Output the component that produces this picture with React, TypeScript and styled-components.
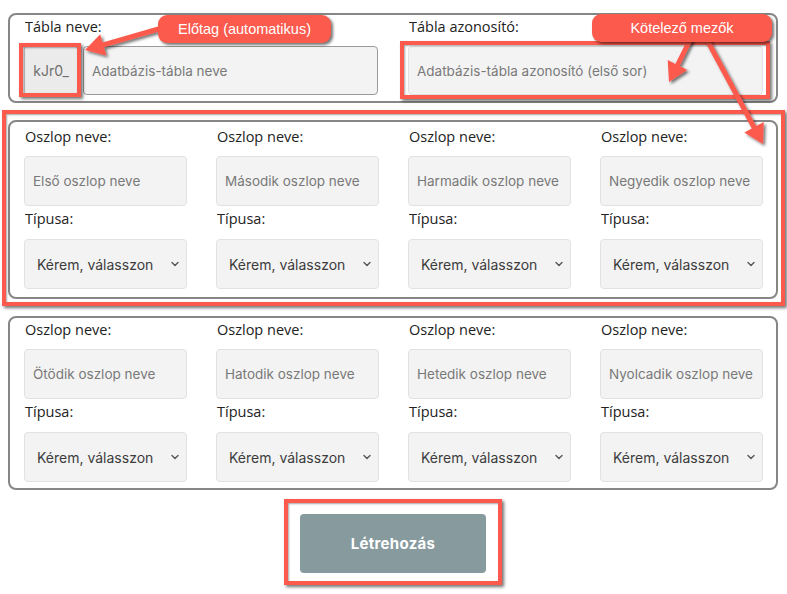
import React from "react";
import styled, { createGlobalStyle } from "styled-components";

const Global = createGlobalStyle`
  html, body { margin: 0; padding: 0; background: #ffffff; }
  body { font-family: "Open Sans", "Noto Sans", sans-serif; }
  * { box-sizing: border-box; }
`;

const RED = "#fb5a4d";

const Page = styled.div`
  position: relative;
  width: 787px;
  height: 594px;
  padding: 13px 8px 0 8px;
  overflow: hidden;
`;

const Card = styled.div<{ $pt: number; $pb: number }>`
  width: 770px;
  border: 2px solid #868686;
  border-radius: 8px;
  padding: ${(p) => p.$pt}px 13px ${(p) => p.$pb}px 14px;
  & + & { margin-top: 17px; }
`;

const TopGrid = styled.div`
  display: grid;
  grid-template-columns: 354px 355px;
  column-gap: 30px;
`;

const ColGrid = styled.div`
  display: grid;
  grid-template-columns: repeat(4, 163px);
  column-gap: 29px;
`;

const Field = styled.div`
  display: flex;
  flex-direction: column;
`;

const Label = styled.label<{ $mb: number; $mt?: number }>`
  font-family: "Open Sans", sans-serif;
  font-size: 14.5px;
  line-height: 20px;
  color: #222;
  padding-left: 1px;
  margin-top: ${(p) => p.$mt ?? 0}px;
  margin-bottom: ${(p) => p.$mb}px;
`;

const InputGroup = styled.div`
  display: flex;
  gap: 5px;
  height: 49px;
`;

const Prefix = styled.div`
  width: 54px;
  flex: none;
  display: flex;
  align-items: center;
  justify-content: center;
  background: #ebebeb;
  border: 1px solid #bdbdbd;
  border-radius: 3px;
  font-family: "Inter", sans-serif;
  font-size: 14px;
  color: #6f6f6f;
`;

const TextInput = styled.input<{ $h: number; $dark?: boolean }>`
  width: 100%;
  height: ${(p) => p.$h}px;
  border: 1px solid ${(p) => (p.$dark ? "#9a9a9a" : "#e2e2e2")};
  border-radius: 4px;
  background: #f3f3f3;
  padding: 0 8px;
  font-family: "Inter", sans-serif;
  font-size: 13.5px;
  color: #333;
  outline: none;
  &::placeholder { color: #797979; }
`;

const SelectWrap = styled.div`
  display: flex;
  align-items: center;
  height: 50px;
`;

const Select = styled.select`
  appearance: none;
  -webkit-appearance: none;
  width: 100%;
  height: 100%;
  border: 1px solid #e2e2e2;
  border-radius: 4px;
  background: #f3f3f3;
  padding: 0 12px;
  font-family: "Inter", sans-serif;
  font-size: 14px;
  color: #3c3c3c;
  outline: none;
`;

const Chevron = styled.svg`
  flex: none;
  width: 10px;
  height: 10px;
  margin-left: -17px;
  margin-right: 7px;
  pointer-events: none;
`;

const ColCell = styled.div`
  display: flex;
  flex-direction: column;
`;

const ButtonRow = styled.div`
  display: flex;
  justify-content: center;
  margin-top: 24px;
  padding-right: 1px;
`;

const Button = styled.button`
  width: 186px;
  height: 59px;
  border: none;
  border-radius: 4px;
  background: #879a9e;
  color: #ffffff;
  font-family: "Inter", sans-serif;
  font-weight: 700;
  font-size: 15px;
  letter-spacing: 0.3px;
`;

const Highlight = styled.div<{ $x: number; $y: number; $w: number; $h: number }>`
  position: absolute;
  left: ${(p) => p.$x}px;
  top: ${(p) => p.$y}px;
  width: ${(p) => p.$w}px;
  height: ${(p) => p.$h}px;
  border: 4px solid ${RED};
  box-shadow: 2px 2px 3px rgba(0, 0, 0, 0.55), inset 1px 1px 2px rgba(0, 0, 0, 0.35);
  pointer-events: none;
`;

const Callout = styled.div<{ $x: number; $y: number; $w: number }>`
  position: absolute;
  left: ${(p) => p.$x}px;
  top: ${(p) => p.$y}px;
  width: ${(p) => p.$w}px;
  height: 28px;
  border-radius: 9px;
  background: ${RED};
  color: #ffffff;
  font-family: "Liberation Sans", Arial, sans-serif;
  font-size: 14.5px;
  display: flex;
  align-items: center;
  justify-content: center;
  box-shadow: 2px 2px 3px rgba(0, 0, 0, 0.55);
`;

const ArrowLayer = styled.svg`
  position: absolute;
  left: 0;
  top: 0;
  width: 787px;
  height: 594px;
  pointer-events: none;
`;

type Pt = [number, number];

function arrowPoints(tail: Pt, tip: Pt, w = 5, L = 19, H = 11): string {
  const dx = tip[0] - tail[0];
  const dy = tip[1] - tail[1];
  const len = Math.hypot(dx, dy);
  const ux = dx / len;
  const uy = dy / len;
  const nx = -uy;
  const ny = ux;
  const bx = tip[0] - ux * L;
  const by = tip[1] - uy * L;
  const hw = w / 2;
  const pts: Pt[] = [
    [tail[0] + nx * hw, tail[1] + ny * hw],
    [bx + nx * hw, by + ny * hw],
    [bx + nx * H, by + ny * H],
    tip,
    [bx - nx * H, by - ny * H],
    [bx - nx * hw, by - ny * hw],
    [tail[0] - nx * hw, tail[1] - ny * hw],
  ];
  return pts.map((p) => `${p[0].toFixed(1)},${p[1].toFixed(1)}`).join(" ");
}

const Chev = () => (
  <Chevron viewBox="0 0 10 10">
    <path d="M2 3.5 L5 6.5 L8 3.5" fill="none" stroke="#555" strokeWidth="1.4" strokeLinecap="round" strokeLinejoin="round" />
  </Chevron>
);

const ColumnCard = ({ names, pt, pb }: { names: string[]; pt: number; pb: number }) => (
  <Card $pt={pt} $pb={pb}>
    <ColGrid>
      {names.map((n) => (
        <ColCell key={n}>
          <Label $mb={9}>Oszlop neve:</Label>
          <TextInput $h={50} placeholder={n} />
          <Label $mt={3} $mb={10}>Típusa:</Label>
          <SelectWrap>
            <Select defaultValue="">
              <option value="">Kérem, válasszon</option>
            </Select>
            <Chev />
          </SelectWrap>
        </ColCell>
      ))}
    </ColGrid>
  </Card>
);

export default function App() {
  return (
    <>
      <Global />
      <Page>
        <Card $pt={2} $pb={6}>
          <TopGrid>
            <Field>
              <Label $mb={9}>Tábla neve:</Label>
              <InputGroup>
                <Prefix>kJr0_</Prefix>
                <TextInput $h={49} $dark placeholder="Adatbázis-tábla neve" />
              </InputGroup>
            </Field>
            <Field>
              <Label $mb={9}>Tábla azonosító:</Label>
              <TextInput $h={49} placeholder="Adatbázis-tábla azonosító (első sor)" />
            </Field>
          </TopGrid>
        </Card>
        <ColumnCard
          pt={5}
          pb={8}
          names={["Első oszlop neve", "Második oszlop neve", "Harmadik oszlop neve", "Negyedik oszlop neve"]}
        />
        <ColumnCard
          pt={2}
          pb={6}
          names={["Ötödik oszlop neve", "Hatodik oszlop neve", "Hetedik oszlop neve", "Nyolcadik oszlop neve"]}
        />
        <ButtonRow>
          <Button>Létrehozás</Button>
        </ButtonRow>

        <Highlight $x={19} $y={43} $w={62} $h={54} />
        <Highlight $x={400} $y={41} $w={370} $h={58} />
        <Highlight $x={2} $y={110} $w={783} $h={196} />
        <Highlight $x={284} $y={499} $w={218} $h={86} />

        <ArrowLayer viewBox="0 0 787 594">
          <defs>
            <filter id="sh" x="-20%" y="-20%" width="140%" height="140%">
              <feDropShadow dx="2" dy="2" stdDeviation="1.5" floodColor="#000" floodOpacity="0.55" />
            </filter>
          </defs>
          <g fill={RED} filter="url(#sh)">
            <polygon points={arrowPoints([162, 28], [85, 50])} />
            <polygon points={arrowPoints([691, 38], [669, 82])} />
            <polygon points={arrowPoints([706, 38], [763, 144])} />
          </g>
        </ArrowLayer>

        <Callout $x={158} $y={15} $w={173}>Előtag (automatikus)</Callout>
        <Callout $x={592} $y={14} $w={180}>Kötelező mezők</Callout>
      </Page>
    </>
  );
}
